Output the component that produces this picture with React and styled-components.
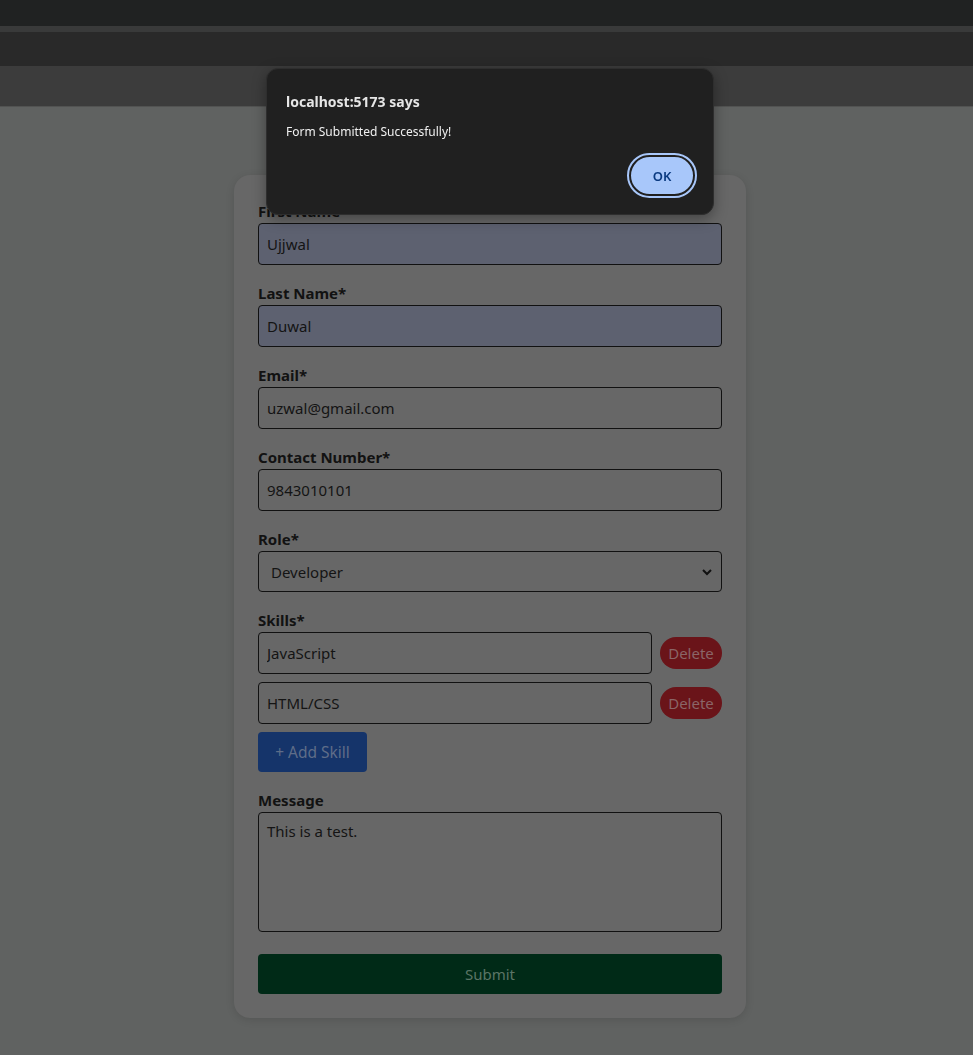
import styled, { createGlobalStyle } from 'styled-components';

const GlobalStyle = createGlobalStyle`
    body {
        margin: 0;
        background: #606261;
        font-family: 'Noto Sans', 'Open Sans', sans-serif;
        color: #121212;
    }
`;

const Page = styled.div`
    min-height: 1055px;
    display: flex;
    flex-direction: column;
`;

const TopBar = styled.div`
    height: ${(p) => p.$h}px;
    background: ${(p) => p.$bg};
    flex-shrink: 0;
`;

const Main = styled.main`
    display: flex;
    justify-content: center;
    padding: 68px 0 0 7px;
    border-top: 1px solid #525352;
`;

const Card = styled.form`
    width: 512px;
    box-sizing: border-box;
    background: #676767;
    border-radius: 16px;
    padding: 24px;
    box-shadow: 0 2px 8px rgba(0, 0, 0, 0.12);
`;

const Field = styled.div`
    display: flex;
    flex-direction: column;
    margin-bottom: ${(p) => p.$mb ?? 16}px;
`;

const Label = styled.label`
    font-size: 15px;
    font-weight: 700;
    line-height: 24px;
    color: #121212;
`;

const Input = styled.input`
    height: 42px;
    box-sizing: border-box;
    border: 1px solid #111;
    border-radius: 4px;
    padding: 0 8px;
    font-family: inherit;
    font-size: 15px;
    color: #141414;
    background: ${(p) => (p.$filled ? '#5d6170' : 'transparent')};
    outline: none;
    flex: ${(p) => (p.$grow ? 1 : 'none')};
`;

const SelectBox = styled.div`
    height: 41px;
    box-sizing: border-box;
    border: 1px solid #111;
    border-radius: 4px;
    display: flex;
    align-items: center;
    padding: 0 12px;
    font-size: 15px;
    color: #141414;
`;

const Chevron = styled.svg`
    margin-left: auto;
    margin-right: -4px;
`;

const SkillRow = styled.div`
    display: flex;
    align-items: center;
    gap: 8px;
    margin-bottom: 8px;
`;

const DeleteButton = styled.button`
    width: 62px;
    height: 32px;
    border: none;
    border-radius: 16px;
    background: #6a1419;
    color: #8a6567;
    font-family: inherit;
    font-size: 15px;
    padding: 0;
`;

const AddButton = styled.button`
    align-self: flex-start;
    width: 109px;
    height: 40px;
    border: none;
    border-radius: 4px;
    background: #15346a;
    color: #5f6d88;
    font-family: inherit;
    font-size: 15.5px;
    padding: 0;
`;

const TextArea = styled.textarea`
    height: 120px;
    box-sizing: border-box;
    border: 1px solid #111;
    border-radius: 4px;
    padding: 8px;
    font-family: inherit;
    font-size: 15px;
    color: #141414;
    background: transparent;
    resize: none;
    outline: none;
    display: block;
`;

const SubmitButton = styled.button`
    width: 100%;
    height: 40px;
    border: none;
    border-radius: 4px;
    background: #002a17;
    color: #5b7566;
    font-family: inherit;
    font-size: 15px;
`;

const DialogLayer = styled.div`
    position: fixed;
    top: 68px;
    left: 0;
    right: 0;
    display: flex;
    justify-content: center;
    padding-left: 7px;
    pointer-events: none;
`;

const Dialog = styled.div`
    width: 448px;
    height: 147px;
    box-sizing: border-box;
    background: #202020;
    border: 1px solid #2e2e2e;
    border-radius: 12px;
    box-shadow: 0 4px 14px rgba(0, 0, 0, 0.35);
    padding: 23px 16px 16px 19px;
    display: flex;
    flex-direction: column;
    font-family: 'Noto Sans', 'Open Sans', sans-serif;
`;

const DialogTitle = styled.div`
    font-size: 14px;
    font-weight: 700;
    color: #e6e6e6;
    line-height: 20px;
`;

const DialogText = styled.div`
    margin-top: 12px;
    font-size: 12px;
    color: #f0f0f0;
    line-height: 16px;
`;

const DialogActions = styled.div`
    margin-top: auto;
    display: flex;
    justify-content: flex-end;
`;

const OkButton = styled.button`
    width: 66px;
    height: 41px;
    border-radius: 21px;
    border: 2px solid #202020;
    outline: 2px solid #a8c7fa;
    outline-offset: 0;
    background: #a8c7fa;
    color: #0a3a80;
    font-family: inherit;
    font-size: 13px;
    font-weight: 600;
    margin-right: 2px;
    margin-bottom: 2px;
`;

function App() {
    return (
        <Page>
            <GlobalStyle />
            <TopBar $h={26} $bg='#202222' />
            <TopBar $h={6} $bg='#393a3a' />
            <TopBar $h={34} $bg='#292929' />
            <TopBar $h={40} $bg='#3c3c3c' />
            <Main>
                <Card onSubmit={(e) => e.preventDefault()}>
                    <Field>
                        <Label>First Name*</Label>
                        <Input $filled defaultValue='Ujjwal' />
                    </Field>
                    <Field>
                        <Label>Last Name*</Label>
                        <Input $filled defaultValue='Duwal' />
                    </Field>
                    <Field>
                        <Label>Email*</Label>
                        <Input defaultValue='uzwal@gmail.com' />
                    </Field>
                    <Field>
                        <Label>Contact Number*</Label>
                        <Input defaultValue='9843010101' />
                    </Field>
                    <Field>
                        <Label>Role*</Label>
                        <SelectBox>
                            Developer
                            <Chevron width='12' height='8' viewBox='0 0 12 8'>
                                <path
                                    d='M2 2l4 4 4-4'
                                    fill='none'
                                    stroke='#111'
                                    strokeWidth='2'
                                />
                            </Chevron>
                        </SelectBox>
                    </Field>
                    <Field>
                        <Label>Skills*</Label>
                        <SkillRow>
                            <Input $grow defaultValue='JavaScript' />
                            <DeleteButton type='button'>Delete</DeleteButton>
                        </SkillRow>
                        <SkillRow>
                            <Input $grow defaultValue='HTML/CSS' />
                            <DeleteButton type='button'>Delete</DeleteButton>
                        </SkillRow>
                        <AddButton type='button'>+ Add Skill</AddButton>
                    </Field>
                    <Field $mb={22}>
                        <Label>Message</Label>
                        <TextArea defaultValue='This is a test.' />
                    </Field>
                    <SubmitButton type='submit'>Submit</SubmitButton>
                </Card>
            </Main>
            <DialogLayer>
                <Dialog>
                    <DialogTitle>localhost:5173 says</DialogTitle>
                    <DialogText>Form Submitted Successfully!</DialogText>
                    <DialogActions>
                        <OkButton type='button'>OK</OkButton>
                    </DialogActions>
                </Dialog>
            </DialogLayer>
        </Page>
    );
}

export default App;
